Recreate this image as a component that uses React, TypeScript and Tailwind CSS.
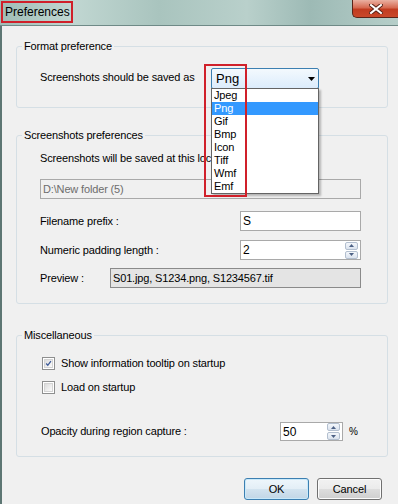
import React from "react";

function Group({ title, className, children }: { title: string; className: string; children: React.ReactNode }) {
  return (
    <fieldset className={"min-w-0 border border-[#d5dfe5] rounded-[3px] p-0 m-0 " + className}>
      <legend className="ml-[5px] px-[2px] leading-[13px] text-[11px] tracking-[-0.15px]">{title}</legend>
      {children}
    </fieldset>
  );
}

function SpinButtons() {
  return (
    <div className="flex flex-col gap-[1px] mr-[2px]">
      <div className="w-[13px] h-[8px] rounded-[2px] border border-[#b3bfcf] bg-linear-to-b from-[#f4f7fb] to-[#dbe3ee] flex items-center justify-center">
        <svg width="5" height="3" viewBox="0 0 5 3"><path d="M0 3 L2.5 0 L5 3 Z" fill="#4d6185" /></svg>
      </div>
      <div className="w-[13px] h-[8px] rounded-[2px] border border-[#b3bfcf] bg-linear-to-b from-[#f4f7fb] to-[#dbe3ee] flex items-center justify-center">
        <svg width="5" height="3" viewBox="0 0 5 3"><path d="M0 0 L2.5 3 L5 0 Z" fill="#4d6185" /></svg>
      </div>
    </div>
  );
}

function Checkbox({ checked }: { checked: boolean }) {
  return (
    <div className="w-[13px] h-[13px] border border-[#8e8f8f] bg-white flex items-center justify-center shrink-0">
      <div className="w-[9px] h-[9px] border border-[#d3d3d3] bg-linear-to-br from-[#dcdcdc] to-[#fbfbfb] flex items-center justify-center">
        {checked && (
          <svg width="9" height="9" viewBox="0 0 9 9">
            <path d="M1.5 4.5 L3.6 6.8 L7.6 1.5" stroke="#3d5a98" strokeWidth="1.7" fill="none" />
          </svg>
        )}
      </div>
    </div>
  );
}

export default function App() {
  const items = ["Jpeg", "Png", "Gif", "Bmp", "Icon", "Tiff", "Wmf", "Emf"];
  return (
    <div className="relative w-[398px] h-[504px] overflow-hidden flex flex-col bg-[#f0f0f0] text-black font-['Liberation_Sans',Arial,sans-serif]">
      {/* Title bar */}
      <div className="h-[26px] shrink-0 flex items-start justify-between border-b border-[#6f8a87] bg-[linear-gradient(90deg,#9fbdb6_0%,#c1d7d2_18%,#a9c4be_40%,#b9d0cb_62%,#9dbab5_78%,#b6cec9_100%)]">
        <div className="ml-[1px] mt-[1px] h-[22px] w-[72px] border-2 border-[#d0202a] flex items-center pl-[2px] text-[12px] leading-[14px]">
          Preferences
        </div>
        <div className="w-[46px] h-[18px] rounded-bl-[5px] border-l border-b border-[#5a2418] bg-[linear-gradient(#eab1a2,#d66a51_45%,#c13c20_55%,#c9482a)] flex items-center justify-center">
          <svg width="14" height="10" viewBox="0 0 14 10">
            <path d="M2 1 L12 9 M12 1 L2 9" stroke="#5a2418" strokeWidth="4" strokeLinecap="square" />
            <path d="M2 1 L12 9 M12 1 L2 9" stroke="#ffffff" strokeWidth="2" strokeLinecap="square" />
          </svg>
        </div>
      </div>

      {/* Body */}
      <div className="flex-1 flex flex-col border-l-2 border-[#5d7673] pl-[14px] pr-[10px] pt-[14px] text-[11px] tracking-[-0.15px]">
        <Group title="Format preference" className="h-[68px]">
          <div className="pl-[23px] pt-[15px] flex items-center">
            <div className="w-[171px] leading-[13px] -mt-[3px]">Screenshots should be saved as</div>
            <div className="w-[108px] h-[21px] rounded-[2px] border border-[#3c7fb1] bg-linear-to-b from-[#f3f9fd] to-[#dcecfc] flex items-center justify-between pl-[4px] pr-[3px]">
              <span className="text-[13px] leading-[15px] tracking-normal">Png</span>
              <svg width="7" height="4" viewBox="0 0 7 4"><path d="M0 0 L7 0 L3.5 4 Z" fill="#000" /></svg>
            </div>
          </div>
        </Group>

        <Group title="Screenshots preferences" className="h-[175px] mt-[21px]">
          <div className="pl-[23px] pr-[26px] flex flex-col">
            <div className="mt-[10px] leading-[13px] whitespace-nowrap">Screenshots will be saved at this loc</div>
            <div className="mt-[14px] h-[20px] border border-[#a9a9a9] bg-[#f0f0f0] text-[#6d6d6d] flex items-center pl-[2px]">
              D:\New folder (5)
            </div>
            <div className="mt-[12px] h-[20px] flex items-center">
              <div className="w-[200px]">Filename prefix :</div>
              <div className="flex-1 h-[20px] border border-[#a9a9a9] bg-white flex items-center pl-[2px] text-[12px] tracking-normal">S</div>
            </div>
            <div className="mt-[9px] h-[20px] flex items-center">
              <div className="w-[200px]">Numeric padding length :</div>
              <div className="flex-1 h-[20px] border border-[#a9a9a9] bg-white flex items-center justify-between pl-[2px]">
                <span className="text-[12px] tracking-normal">2</span>
                <SpinButtons />
              </div>
            </div>
            <div className="mt-[8px] h-[20px] flex items-center">
              <div className="w-[70px]">Preview :</div>
              <div className="flex-1 h-[20px] border border-[#8a8a8a] bg-[#e4e4e4] flex items-center pl-[2px]">
                S01.jpg, S1234.png, S1234567.tif
              </div>
            </div>
          </div>
        </Group>

        <Group title="Miscellaneous" className="h-[128px] mt-[25px]">
          <div className="flex flex-col">
            <div className="mt-[15px] pl-[25px] h-[13px] flex items-center gap-[6px]">
              <Checkbox checked={true} />
              <span className="leading-[13px]">Show information tooltip on startup</span>
            </div>
            <div className="mt-[11px] pl-[25px] h-[13px] flex items-center gap-[6px]">
              <Checkbox checked={false} />
              <span className="leading-[13px]">Load on startup</span>
            </div>
            <div className="mt-[28px] pl-[24px] h-[19px] flex items-center">
              <div className="w-[239px]">Opacity during region capture :</div>
              <div className="w-[63px] h-[19px] border border-[#a9a9a9] bg-white flex items-center justify-between pl-[2px]">
                <span className="text-[12px] tracking-normal">50</span>
                <SpinButtons />
              </div>
              <span className="ml-[6px] text-[10px]">%</span>
            </div>
          </div>
        </Group>

        <div className="mt-[21px] pr-[6px] flex justify-end gap-[8px]">
          <button className="w-[65px] h-[22px] rounded-[3px] border border-[#3c7fb1] shadow-[inset_0_0_0_1px_#c9e9fa] bg-[linear-gradient(#eef6fb,#e3eef6_49%,#d3e3ef_51%,#c2d6e6)] text-[11px]">
            OK
          </button>
          <button className="w-[65px] h-[22px] rounded-[3px] border border-[#707070] shadow-[inset_0_0_0_1px_#fcfcfc] bg-[linear-gradient(#f2f2f2,#ebebeb_49%,#dddddd_51%,#cfcfcf)] text-[11px]">
            Cancel
          </button>
        </div>
      </div>

      {/* Dropdown list overlay */}
      <div className="absolute left-[211px] top-[88px] w-[108px] border border-[#646464] bg-white shadow-[2px_2px_2px_rgba(0,0,0,0.25)] text-[11px] tracking-[-0.15px]">
        {items.map((it) => (
          <div
            key={it}
            className={
              "h-[13px] leading-[13px] pl-[2px] " + (it === "Png" ? "bg-[#3399ff] text-white" : "text-black")
            }
          >
            {it}
          </div>
        ))}
      </div>

      {/* Red annotation box */}
      <div className="absolute left-[204px] top-[64px] w-[43px] h-[133px] border-2 border-[#d0202a] pointer-events-none" />
    </div>
  );
}
